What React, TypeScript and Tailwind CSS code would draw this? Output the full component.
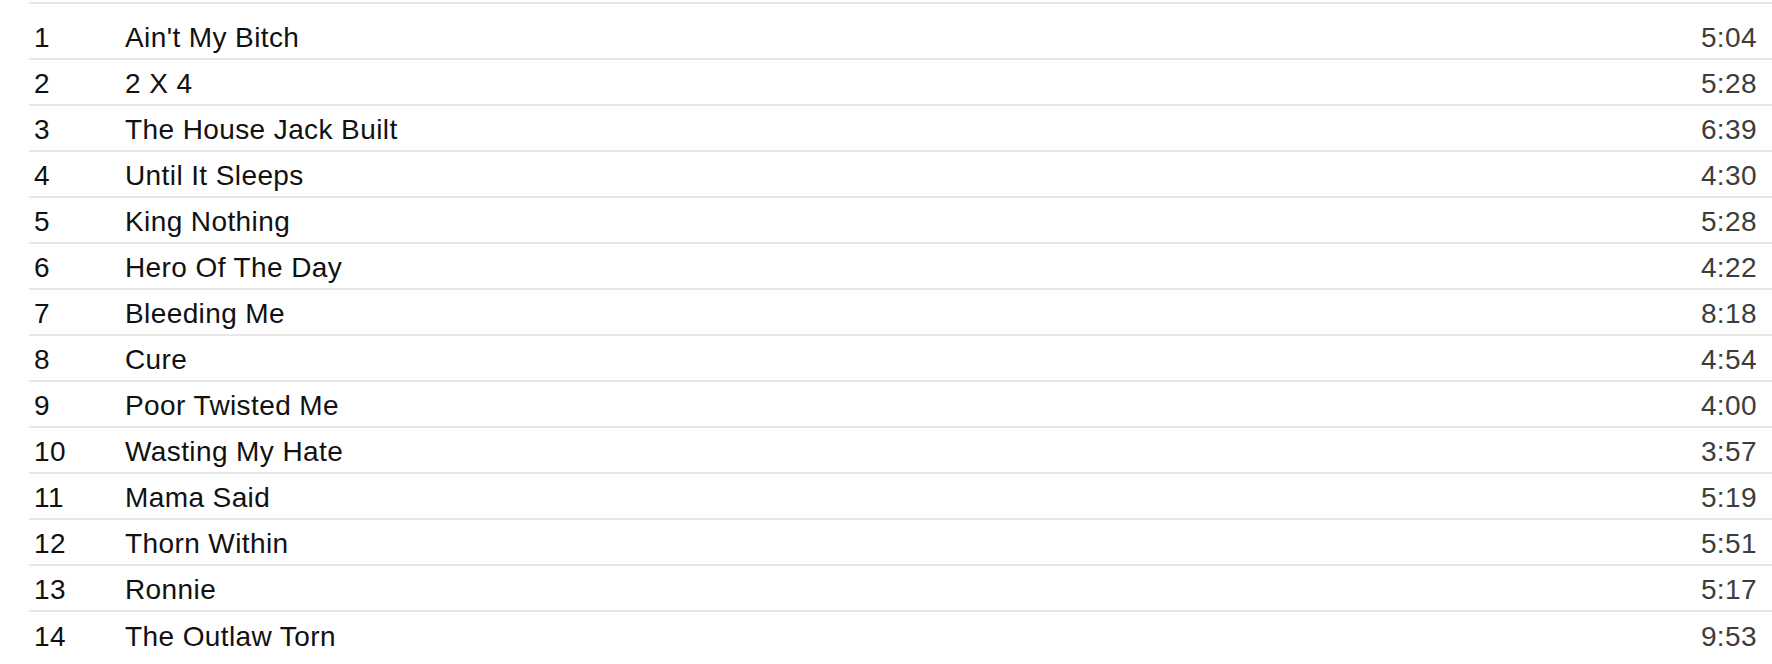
const tracks: [number, string, string][] = [
  [1, "Ain't My Bitch", "5:04"],
  [2, "2 X 4", "5:28"],
  [3, "The House Jack Built", "6:39"],
  [4, "Until It Sleeps", "4:30"],
  [5, "King Nothing", "5:28"],
  [6, "Hero Of The Day", "4:22"],
  [7, "Bleeding Me", "8:18"],
  [8, "Cure", "4:54"],
  [9, "Poor Twisted Me", "4:00"],
  [10, "Wasting My Hate", "3:57"],
  [11, "Mama Said", "5:19"],
  [12, "Thorn Within", "5:51"],
  [13, "Ronnie", "5:17"],
  [14, "The Outlaw Torn", "9:53"],
];

export default function App() {
  return (
    <div
      className="w-[1772px] h-[664px] overflow-hidden bg-white pt-[2px] pl-[29px]"
      style={{ fontFamily: '"Liberation Sans", Arial, sans-serif' }}
    >
      <div className="h-[2px] bg-[#e6e6e6]" />
      <div className="pt-[10px]">
        {tracks.map(([n, title, dur], i) => (
          <div
            key={n}
            className={
              "flex items-center h-[46px] pt-[4px] text-[28px] leading-none tracking-[0.4px] " +
              (i < tracks.length - 1 ? "border-b-2 border-[#e6e6e6]" : "")
            }
          >
            <div className="w-[96px] pl-[5px] text-[#111]">{n}</div>
            <div className="flex-1 text-[#111]">{title}</div>
            <div className="pr-[15px] text-[#3d3d3d]">{dur}</div>
          </div>
        ))}
      </div>
    </div>
  );
}
